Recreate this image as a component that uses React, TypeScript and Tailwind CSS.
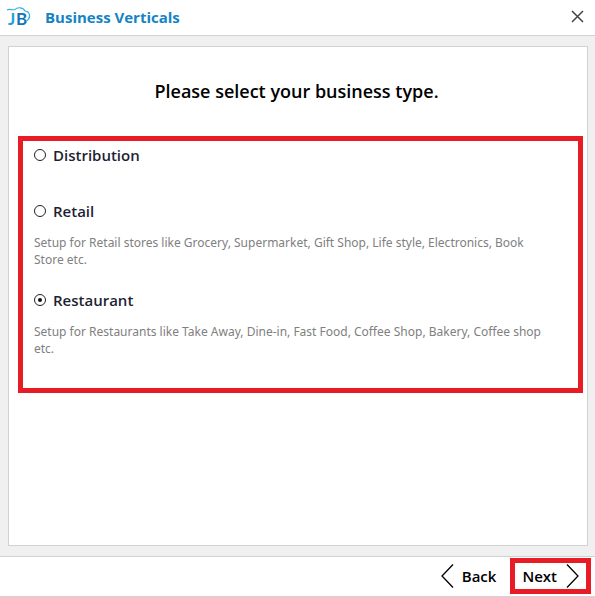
import { useState } from 'react'

interface BusinessType {
  id: string
  name: string
  description?: string
}

const businessTypes: BusinessType[] = [
  { id: 'distribution', name: 'Distribution' },
  {
    id: 'retail',
    name: 'Retail',
    description:
      'Setup for Retail stores like Grocery, Supermarket, Gift Shop, Life style, Electronics, Book Store etc.',
  },
  {
    id: 'restaurant',
    name: 'Restaurant',
    description:
      'Setup for Restaurants like Take Away, Dine-in, Fast Food, Coffee Shop, Bakery, Coffee shop etc.',
  },
]

const Logo = () => (
  <svg width="26" height="30" viewBox="0 0 26 30" fill="none" aria-hidden="true" className="overflow-visible">
    <text x="1" y="22" fontSize="17" fontWeight="700" fill="#1ba3dc" fontFamily="Lato, sans-serif">
      J
    </text>
    <text x="9" y="22" fontSize="17" fontWeight="700" fill="#1474b8" fontFamily="Lato, sans-serif">
      B
    </text>
    <path
      d="M0 7c3-1.500 5 .5 8-.5C10 4 16 4 18 8c4 0 6 5 3.500 8-1 1-1 2-2.500 2.500"
      stroke="#38b0e3"
      strokeWidth="1.2"
    />
  </svg>
)

const App = () => {
  const [selected, setSelected] = useState('restaurant')

  return (
    <div className="flex min-h-screen flex-col border-b border-[#d2d2d2] bg-white font-['Open_Sans',sans-serif]">
      {/* Title bar */}
      <header className="flex h-9 items-center border-b border-[#d2d2d2] pr-2.5 pl-[7px]">
        <Logo />
        <h1 className="ml-3 text-[15px] font-bold text-[#1583c5]">Business Verticals</h1>
        <button type="button" aria-label="Close" className="ml-auto pb-1 text-[#444]">
          <svg width="14" height="14" viewBox="0 0 14 14" fill="none" stroke="currentColor" strokeWidth="1.5">
            <path d="M1 2l11 11M12 2L1 13" />
          </svg>
        </button>
      </header>

      <main className="flex flex-1 bg-[#f0f0f0] pt-2.5 pr-[7px] pb-2.5 pl-2">
        <div className="flex-1 border border-[#d2d2d2] bg-white pt-8 pr-1 pl-[9px]">
          <h2 className="pr-2 text-center text-lg leading-6 font-[650] text-black">
            Please select your business type.
          </h2>

          {/* Business type options */}
          <div
            role="radiogroup"
            aria-label="Business type"
            className="mt-[33px] border-5 border-[#e81c24] pt-1 pr-6 pb-[31px] pl-[11px]"
          >
            {businessTypes.map((type) => (
              <div key={type.id} className="mb-[22px] last:mb-0">
                <label className="flex h-5 items-center gap-[7px] text-[15px] font-semibold text-[#1f1f35]">
                  <input
                    type="radio"
                    name="businessType"
                    value={type.id}
                    checked={selected === type.id}
                    onChange={() => setSelected(type.id)}
                    className="grid size-3 appearance-none place-items-center rounded-full border border-[#222] checked:before:size-1 checked:before:rounded-full checked:before:bg-[#111]"
                  />
                  {type.name}
                </label>
                {type.description ? (
                  <p className="mt-[13px] font-['Noto_Sans',sans-serif] text-xs leading-[17px] text-[#808080]">
                    {type.description}
                  </p>
                ) : (
                  <div className="h-3.5" />
                )}
              </div>
            ))}
          </div>
        </div>
      </main>

      {/* Wizard navigation */}
      <footer className="flex justify-end gap-3.5 border-t border-[#d2d2d2] pt-px pr-1 pb-0.5 text-[15px] font-semibold text-black">
        <button type="button" className="flex h-9 items-center gap-2">
          <svg width="13" height="24" viewBox="0 0 13 24" fill="none" stroke="currentColor" strokeWidth="1.3">
            <path d="M12 0.5L1 12l11 11.500" />
          </svg>
          Back
        </button>
        <button type="button" className="flex h-9 items-center gap-[9px] border-5 border-[#e81c24] px-[7px]">
          Next
          <svg width="13" height="24" viewBox="0 0 13 24" fill="none" stroke="currentColor" strokeWidth="1.3">
            <path d="M1 0.5L12 12 1 23.500" />
          </svg>
        </button>
      </footer>
    </div>
  )
}

export default App
